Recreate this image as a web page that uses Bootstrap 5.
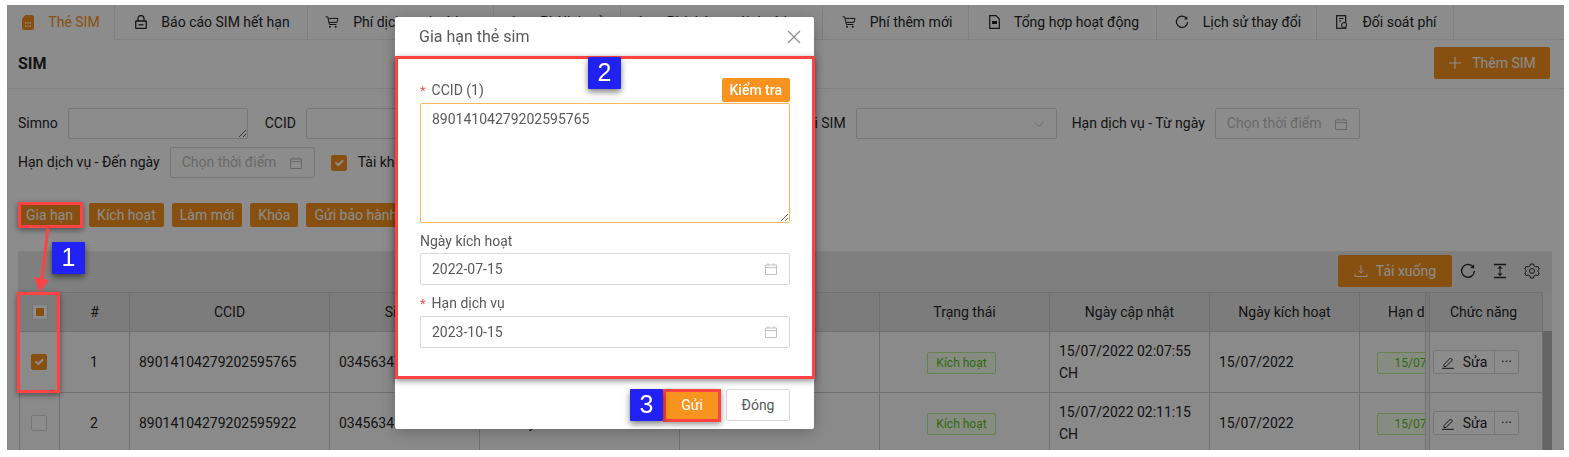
<!DOCTYPE html>
<html lang="vi">
<head>
  <meta charset="UTF-8">
  <meta name="viewport" content="width=device-width, initial-scale=1.0">
  <title>Gia hạn thẻ sim</title>
  <link href="https://cdn.jsdelivr.net/npm/bootstrap@5.3.0/dist/css/bootstrap.min.css" rel="stylesheet">
  <style>
    html, body { height: 457px; overflow: hidden; }
    body { font-family: Roboto, "Liberation Sans", sans-serif; font-size: 14px; color: #262626; background: #fff; }
    svg { display: block; flex: none; }
    .app-screen { position: relative; width: 1557px; height: 445px; margin: 5px 0 0 7px; overflow: hidden; background: #fff; }
    .app-mask { position: absolute; inset: 0; background: rgba(0,0,0,.45); }

    /* tabs */
    .sim-tabs { height: 35px; padding-left: 1px; border-bottom: 1px solid #eaeaea; }
    .sim-tab { display: flex; align-items: center; justify-content: center; gap: 14px; height: 34px; margin-right: 3px; border-right: 1px solid #eaeaea; color: #262626; text-decoration: none; white-space: nowrap; }
    .sim-tab.active { color: #f7931e; height: 35px; background: #fff; margin-bottom: -1px; }
    .sim-tab:nth-child(1) { width: 107px; }
    .sim-tab:nth-child(2) { width: 190px; }
    .sim-tab:nth-child(3) { width: 183px; }
    .sim-tab:nth-child(4) { width: 124px; }
    .sim-tab:nth-child(5) { width: 199px; }
    .sim-tab:nth-child(6) { width: 143px; }
    .sim-tab:nth-child(7) { width: 185px; }
    .sim-tab:nth-child(8) { width: 157px; }
    .sim-tab:nth-child(9) { width: 134px; }

    .page-head { height: 49px; padding: 7px 14px 0 11px; border-bottom: 1px solid #eaeaea; }
    .page-title { font-size: 16px; font-weight: 700; line-height: 22px; margin-top: 6px; }
    .btn-sim { background: #f7931e; border: 1px solid #f7931e; color: #fff; border-radius: 2px; font-size: 14px; line-height: 22px; }
    .btn-sim:hover { background: #f7931e; color: #fff; }
    .btn-add { width: 116px; height: 32px; padding: 0; display: inline-flex; align-items: center; justify-content: center; gap: 10px; }

    /* filters */
    .filter-zone { padding: 19px 0 0 11px; }
    .filter-row { height: 31px; margin-bottom: 8px; }
    .f-label { margin-right: 10px; white-space: nowrap; }
    .f-box { height: 31px; border: 1px solid #d9d9d9; border-radius: 2px; margin-right: 16px; background: #fff; color: #bfbfbf; }
    textarea.f-box { display: block; min-height: 31px; padding: 4px 10px; resize: vertical; margin-right: 17px; }
    .w-text { width: 180px; }
    .w-select { width: 201px; margin-right: 15px; }
    .w-date { width: 145px; }
    .date-pick { display: flex; align-items: center; justify-content: space-between; padding: 0 11px; }
    .action-row { margin-top: 25px; gap: 8px; }
    .btn-act { height: 24px; padding: 0 7px; line-height: 22px; }

    /* table */
    .tbl-bar { height: 41px; margin: 24px 12px 0 11px; padding: 4px 12px 0 0; background: #e7e7e7; gap: 16px; }
    .btn-down { width: 114px; height: 32px; padding: 0; margin-right: -8px; display: inline-flex; align-items: center; justify-content: center; gap: 8px; }
    .tbl-area { margin-left: 12px; }
    .tbl-scroll { width: 1524px; overflow: hidden; }
    .sim-table { table-layout: fixed; width: 1588px; margin: 0; border-collapse: separate; border-spacing: 0; border-left: 1px solid #cdcdcd; color: #262626; --bs-table-bg: transparent; }
    .c-a { width: 40px; }
    .c-b { width: 70px; }
    .c-c { width: 200px; }
    .c-d { width: 150px; }
    .c-e { width: 170px; }
    .c-f { width: 160px; }
    .c-g { width: 130px; }
    .c-h { width: 118px; }
    .sim-table th, .sim-table td { padding: 8px 10px 8px 9px; line-height: 22px; border: 0; border-right: 1px solid #cdcdcd; border-bottom: 1px solid #cdcdcd; vertical-align: middle; font-weight: 400; }
    .sim-table th { height: 39px; padding-left: 10px; background: #e2e2e2; text-align: center; border-top: 1px solid #cdcdcd; }
    .sim-table td { height: 61px; background: #fbfbfb; }
    .sim-table th.col-fix, .sim-table td.col-fix { position: sticky; right: 0; padding-left: 8px; padding-right: 8px; box-shadow: inset 1px 0 0 #cdcdcd, inset 4px 0 0 #f0f0f0, inset 5px 0 0 #cdcdcd; }
    .sim-table th.col-fix { background: #e2e2e2; box-shadow: inset 1px 0 0 #cdcdcd, inset 4px 0 0 #dadada, inset 5px 0 0 #cdcdcd; }
    .col-center { text-align: center; }
    .sim-table .form-check-input { display: block; width: 16px; height: 16px; margin: 0 auto; border-radius: 2px; border-color: #d9d9d9; float: none; }
    .sim-table .form-check-input:checked, .chk-on.form-check-input:checked { background-color: #f7931e; border-color: #f7931e; }
    .sim-table .form-check-input.chk-some { background: #fff linear-gradient(#f7931e, #f7931e) center / 8px 8px no-repeat; }
    .chk-on.form-check-input { width: 16px; height: 16px; margin: 0 11px 0 0; border-radius: 2px; flex: none; }
    .tag-ok { display: inline-block; padding: 0 12px 0 17px; height: 22px; font-size: 12px; line-height: 20px; white-space: nowrap; color: #52c41a; background: #f6ffed; border: 1px solid #b7eb8f; border-radius: 2px; }
    .tag-state { padding: 0 8px; margin-right: 5px; }
    .btn-pair { display: flex; height: 24px; border: 1px solid #d9d9d9; border-radius: 2px; width: 86px; background: #fff; }
    .btn-pair span { display: flex; align-items: center; justify-content: center; }
    .pair-edit { flex: 1; gap: 8px; border-right: 1px solid #d9d9d9; }
    .pair-more { width: 23px; line-height: 1; }
    .fake-scroll { width: 9px; margin-left: 0; background: linear-gradient(#ececec 39px, #b9b9b9 39px); }

    /* modal */
    .sim-modal { position: absolute; left: 388px; top: 12px; width: 419px; height: 412px; background: #fff; border: 0; border-radius: 2px; box-shadow: 0 3px 16px rgba(0,0,0,.25); color: #595959; }
    .sim-modal .modal-header { height: 39px; padding: 0 13px 0 24px; border: 0; }
    .sim-modal .modal-title { font-size: 16px; line-height: 22px; color: #595959; font-weight: 400; }
    .sim-modal .modal-body { height: 323px; flex: none; padding: 21px 24px 0 25px; }
    .sim-modal .modal-footer { height: 50px; padding: 10px 24px 8px 0; border: 0; gap: 7px; flex-wrap: nowrap; align-items: flex-start; }
    .sim-modal .modal-footer > * { margin: 0; }
    .label-head { height: 26px; }
    .req::before { content: "*"; color: #ff4d4f; margin-right: 6px; font-size: 13px; }
    .btn-check-ccid { height: 24px; padding: 0 7px; font-weight: 500; line-height: 22px; }
    .ccid-area { height: 120px; margin-top: 0; padding: 4px 11px; border: 1px solid #f9b65f; border-radius: 2px; font-size: 14px; line-height: 22px; color: #595959; }
    .ccid-area:focus { border-color: #f9b65f; box-shadow: none; }
    .m-label { margin-top: 7px; line-height: 22px; }
    .m-label + .date-pick { margin-top: 1px; }
    .m-date { height: 32px; border: 1px solid #d9d9d9; border-radius: 2px; color: #595959; }
    .cal-m { color: #bfbfbf; }
    .btn-send { width: 54px; height: 30px; margin-top: 1px !important; padding: 0; line-height: 28px; }
    .btn-close-m { width: 64px; height: 32px; padding: 0; line-height: 30px; background: #fff; border: 1px solid #d9d9d9; border-radius: 2px; color: #595959; font-size: 14px; }

    /* annotations over the screenshot */
    .note-box { position: absolute; border: 3px solid #ff4343; box-shadow: 0 2px 6px rgba(0,0,0,.45); }
    .note-a { left: 11px; top: 197px; width: 65px; height: 26px; }
    .note-b { left: 10px; top: 287px; width: 43px; height: 101px; }
    .note-c { left: 388px; top: 51px; width: 420px; height: 323px; }
    .note-d { left: 656px; top: 384px; width: 58px; height: 33px; }
    .note-num { position: absolute; width: 33px; height: 32px; display: flex; align-items: center; justify-content: center; background: #2121f3; color: #fff; font-family: "Liberation Sans", Arial, sans-serif; font-size: 25px; border-radius: 1px; box-shadow: 0 3px 6px rgba(0,0,0,.5); }
    .num-1 { left: 45px; top: 237px; }
    .num-2 { left: 581px; top: 52px; }
    .num-3 { left: 623px; top: 384px; }
    .note-arrow { position: absolute; left: 22px; top: 222px; }
  </style>
</head>
<body>
  <svg class="d-none" aria-hidden="true">
    <symbol id="i-cal" viewBox="0 0 14 14"><path d="M1.5 3h11v9.5h-11zM1.5 5.6h11M4 1.2V3M10 1.2V3" fill="none" stroke="currentColor" stroke-width="1"/></symbol>
    <symbol id="i-cart" viewBox="0 0 14 14"><path d="M.7 1.8h2l1.7 7.7h7M3.2 3.4h9.8l-1 4H4.1" fill="none" stroke="currentColor" stroke-width="1"/><circle cx="5" cy="11.8" r="1" fill="currentColor"/><circle cx="10.7" cy="11.8" r="1" fill="currentColor"/></symbol>
    <symbol id="i-reload" viewBox="0 0 14 14"><path d="M11.6 3.6A5.6 5.6 0 1 0 12.6 7" fill="none" stroke="currentColor" stroke-width="1.2"/><path d="M12.4 1.2v3.4H9z" fill="currentColor"/></symbol>
  </svg>

  <div class="app-screen">
    <nav class="sim-tabs d-flex">
      <a class="sim-tab active" href="#">
        <svg width="12" height="15" viewBox="0 0 12 15"><path d="M3.5 0H10a2 2 0 0 1 2 2v11a2 2 0 0 1-2 2H2a2 2 0 0 1-2-2V4z" fill="#f7931e"/><path d="M3 7h6v5H3z" fill="#fff" opacity=".75"/><path d="M5 7v5M7 7v5M3 9.5h6" stroke="#f7931e"/></svg>
        <span>Thẻ SIM</span>
      </a>
      <a class="sim-tab" href="#">
        <svg width="12" height="14" viewBox="0 0 12 14"><path d="M3 6V3.5a3 3 0 0 1 6 0V6" fill="none" stroke="currentColor" stroke-width="1.3"/><rect x=".7" y="6" width="10.6" height="7.3" rx=".6" fill="none" stroke="currentColor" stroke-width="1.3"/><path d="M3.5 9.8h5" stroke="currentColor" stroke-width="1.3"/></svg>
        <span>Báo cáo SIM hết hạn</span>
      </a>
      <a class="sim-tab" href="#"><svg width="14" height="14"><use href="#i-cart"/></svg><span>Phí dịch vụ thuê bao</span></a>
      <a class="sim-tab" href="#"><svg width="14" height="14"><use href="#i-cart"/></svg><span>Phí lịch sử</span></a>
      <a class="sim-tab" href="#"><svg width="14" height="14"><use href="#i-cart"/></svg><span>Phí thêm mới thuê bao</span></a>
      <a class="sim-tab" href="#"><svg width="14" height="14"><use href="#i-cart"/></svg><span>Phí thêm mới</span></a>
      <a class="sim-tab" href="#">
        <svg width="11" height="14" viewBox="0 0 11 14"><path d="M.7.7h6.3l3.3 3.3v9.3H.7z" fill="none" stroke="currentColor" stroke-width="1.2"/><path d="M3 6h5v3H3z" fill="currentColor"/></svg>
        <span>Tổng hợp hoạt động</span>
      </a>
      <a class="sim-tab" href="#"><svg width="14" height="14"><use href="#i-reload"/></svg><span>Lịch sử thay đổi</span></a>
      <a class="sim-tab" href="#">
        <svg width="12" height="14" viewBox="0 0 12 14"><rect x=".7" y=".7" width="9" height="12.6" fill="none" stroke="currentColor" stroke-width="1.2"/><path d="M3 3.5h4.5M3 6h2" stroke="currentColor"/><circle cx="8" cy="10" r="2.5" fill="#fff" stroke="currentColor"/></svg>
        <span>Đối soát phí</span>
      </a>
    </nav>

    <div class="page-head d-flex justify-content-between align-items-start">
      <div class="page-title">SIM</div>
      <button class="btn btn-sim btn-add" type="button">
        <svg width="14" height="14" viewBox="0 0 14 14"><path d="M7 1v12M1 7h12" stroke="#fff" stroke-width="1.2"/></svg>
        Thêm SIM
      </button>
    </div>

    <div class="filter-zone">
      <div class="filter-row d-flex align-items-center">
        <label class="f-label">Simno</label>
        <textarea class="f-box w-text"></textarea>
        <label class="f-label">CCID</label>
        <textarea class="f-box w-text"></textarea>
        <label class="f-label">Trạng thái</label>
        <div class="f-box w-select"></div>
        <label class="f-label">Loại SIM</label>
        <div class="f-box w-select date-pick">
          <span></span>
          <svg width="12" height="12" viewBox="0 0 12 12"><path d="M1.5 4L6 8.5 10.5 4" fill="none" stroke="#bfbfbf"/></svg>
        </div>
        <label class="f-label">Hạn dịch vụ - Từ ngày</label>
        <div class="f-box w-date date-pick"><span>Chọn thời điểm</span><svg width="14" height="14"><use href="#i-cal"/></svg></div>
      </div>
      <div class="filter-row d-flex align-items-center">
        <label class="f-label">Hạn dịch vụ - Đến ngày</label>
        <div class="f-box w-date date-pick"><span>Chọn thời điểm</span><svg width="14" height="14"><use href="#i-cal"/></svg></div>
        <input class="form-check-input chk-on" type="checkbox" checked>
        <label>Tài khoản</label>
      </div>
      <div class="action-row d-flex">
        <button class="btn btn-sim btn-act" type="button">Gia hạn</button>
        <button class="btn btn-sim btn-act" type="button">Kích hoạt</button>
        <button class="btn btn-sim btn-act" type="button">Làm mới</button>
        <button class="btn btn-sim btn-act" type="button">Khóa</button>
        <button class="btn btn-sim btn-act" type="button">Gửi bảo hành</button>
      </div>
    </div>

    <div class="tbl-bar d-flex justify-content-end">
      <button class="btn btn-sim btn-down" type="button">
        <svg width="14" height="14" viewBox="0 0 14 14"><path d="M7 1v8M4.5 6.5L7 9l2.5-2.5M1 10v2.5h12V10" fill="none" stroke="#fff"/></svg>
        Tải xuống
      </button>
      <svg class="mt-2" width="16" height="16"><use href="#i-reload"/></svg>
      <svg class="mt-2" width="16" height="16" viewBox="0 0 16 16"><path d="M2 1.5h12M2 14.5h12" stroke="currentColor" stroke-width="1.3"/><path d="M8 3.5v9M6 5.5l2-2 2 2M6 10.5l2 2 2-2" fill="currentColor" stroke="currentColor"/></svg>
      <svg class="mt-2" width="16" height="16" viewBox="0 0 16 16"><path d="M6.5 1h3l.5 2 1.800 1 2-.6 1.500 2.600-1.500 1.400v1.200l1.500 1.400-1.500 2.600-2-.6-1.800 1-.5 2h-3l-.5-2-1.800-1-2 .6L.7 10l1.500-1.400V7.400L.7 6l1.500-2.600 2 .6 1.800-1z" fill="none" stroke="currentColor"/><circle cx="8" cy="8" r="2.5" fill="none" stroke="currentColor"/></svg>
    </div>

    <div class="tbl-area d-flex">
      <div class="tbl-scroll">
        <table class="table sim-table">
          <colgroup>
            <col class="c-a"><col class="c-b"><col class="c-c"><col class="c-d"><col class="c-c"><col class="c-c"><col class="c-e"><col class="c-f"><col class="c-d"><col class="c-g"><col class="c-h">
          </colgroup>
          <thead>
            <tr>
              <th><input class="form-check-input chk-some" type="checkbox"></th>
              <th>#</th>
              <th>CCID</th>
              <th>Simno</th>
              <th>Gói cước</th>
              <th>Loại SIM</th>
              <th>Trạng thái</th>
              <th>Ngày cập nhật</th>
              <th>Ngày kích hoạt</th>
              <th>Hạn dịch vụ</th>
              <th class="col-fix">Chức năng</th>
            </tr>
          </thead>
          <tbody>
            <tr>
              <td><input class="form-check-input" type="checkbox" checked></td>
              <td class="col-center">1</td>
              <td>89014104279202595765</td>
              <td>034563479</td>
              <td></td>
              <td></td>
              <td class="col-center"><span class="tag-ok tag-state">Kích hoạt</span></td>
              <td>15/07/2022 02:07:55 CH</td>
              <td>15/07/2022</td>
              <td class="col-center"><span class="tag-ok">15/07/2023</span></td>
              <td class="col-fix"><div class="btn-pair"><span class="pair-edit"><svg width="14" height="14" viewBox="0 0 14 14"><path d="M3 9.5L9.5 3l2 2L5 11.5H3zM1 13.3h12" fill="none" stroke="currentColor"/></svg>Sửa</span><span class="pair-more">···</span></div></td>
            </tr>
            <tr>
              <td><input class="form-check-input" type="checkbox"></td>
              <td class="col-center">2</td>
              <td>89014104279202595922</td>
              <td>034563425</td>
              <td>Sim Mỹ</td>
              <td></td>
              <td class="col-center"><span class="tag-ok tag-state">Kích hoạt</span></td>
              <td>15/07/2022 02:11:15 CH</td>
              <td>15/07/2022</td>
              <td class="col-center"><span class="tag-ok">15/07/2023</span></td>
              <td class="col-fix"><div class="btn-pair"><span class="pair-edit"><svg width="14" height="14" viewBox="0 0 14 14"><path d="M3 9.5L9.5 3l2 2L5 11.5H3zM1 13.3h12" fill="none" stroke="currentColor"/></svg>Sửa</span><span class="pair-more">···</span></div></td>
            </tr>
          </tbody>
        </table>
      </div>
      <div class="fake-scroll"></div>
    </div>

    <div class="app-mask"></div>

    <div class="modal-content sim-modal">
      <div class="modal-header justify-content-between">
        <h5 class="modal-title">Gia hạn thẻ sim</h5>
        <svg width="14" height="14" viewBox="0 0 14 14"><path d="M1 1l12 12M13 1L1 13" stroke="#8c8c8c" stroke-width="1.2"/></svg>
      </div>
      <div class="modal-body">
        <div class="label-head d-flex justify-content-between align-items-center">
          <label class="req">CCID (1)</label>
          <button class="btn btn-sim btn-check-ccid" type="button">Kiểm tra</button>
        </div>
        <textarea class="form-control ccid-area">89014104279202595765</textarea>
        <div class="m-label">Ngày kích hoạt</div>
        <div class="m-date date-pick"><span>2022-07-15</span><svg class="cal-m" width="14" height="14"><use href="#i-cal"/></svg></div>
        <div class="m-label req">Hạn dịch vụ</div>
        <div class="m-date date-pick"><span>2023-10-15</span><svg class="cal-m" width="14" height="14"><use href="#i-cal"/></svg></div>
      </div>
      <div class="modal-footer">
        <button class="btn btn-sim btn-send" type="button">Gửi</button>
        <button class="btn btn-close-m" type="button">Đóng</button>
      </div>
    </div>

    <div class="note-box note-a"></div>
    <div class="note-box note-b"></div>
    <div class="note-box note-c"></div>
    <div class="note-box note-d"></div>
    <svg class="note-arrow" width="26" height="66" viewBox="0 0 26 66">
      <path d="M19 0L13 52" stroke="#ff4343" stroke-width="3"/>
      <path d="M5 50L20 53L10.5 65z" fill="#ff4343"/>
    </svg>
    <div class="note-num num-1">1</div>
    <div class="note-num num-2">2</div>
    <div class="note-num num-3">3</div>
  </div>

  <script src="https://cdn.jsdelivr.net/npm/bootstrap@5.3.0/dist/js/bootstrap.bundle.min.js"></script>
</body>
</html>
